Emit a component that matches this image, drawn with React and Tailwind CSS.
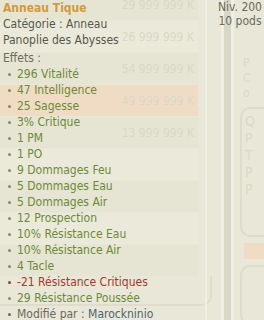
import React from "react";

const effects = [
  { t: "296 Vitalité", c: "green" },
  { t: "47 Intelligence", c: "green" },
  { t: "25 Sagesse", c: "green" },
  { t: "3% Critique", c: "green" },
  { t: "1 PM", c: "green" },
  { t: "1 PO", c: "green" },
  { t: "9 Dommages Feu", c: "green" },
  { t: "5 Dommages Eau", c: "green" },
  { t: "5 Dommages Air", c: "green" },
  { t: "12 Prospection", c: "green" },
  { t: "10% Résistance Eau", c: "green" },
  { t: "10% Résistance Air", c: "green" },
  { t: "4 Tacle", c: "green" },
  { t: "-21 Résistance Critiques", c: "red" },
  { t: "29 Résistance Poussée", c: "green" },
];

const rows = [
  { p: "29 999 999 K", bg: "bg-[#e6e4d2]" },
  { p: "26 999 999 K", bg: "bg-[#ebe9da]" },
  { p: "54 999 999 K", bg: "bg-[#e6e4d2]" },
  { p: "49 999 999 K", bg: "bg-[#f0dcc4]" },
  { p: "13 999 999 K", bg: "bg-[#e6e4d2]" },
  { p: "", bg: "bg-[#ebe9da]" },
  { p: "", bg: "bg-[#e6e4d2]" },
  { p: "", bg: "bg-[#ebe9da]" },
  { p: "", bg: "bg-[#e6e4d2]" },
];

export default function App() {
  return (
    <div
      className="relative w-[264px] h-[320px] overflow-hidden bg-[#e9e7d8]"
      style={{ fontFamily: '"DejaVu Sans Condensed", "DejaVu Sans", Verdana, sans-serif' }}
    >
      {/* faint background UI */}
      <div className="flex h-full">
        <div className="w-[205px] flex flex-col -mt-[11px]">
          <div className="w-[198px] flex flex-col gap-[1px]">
            {rows.map((r, i) => (
              <div
                key={i}
                className={`h-[31px] shrink-0 flex items-center justify-end pr-[4px] text-[12px] text-[#dbd8c6] ${r.bg}`}
              >
                {r.p}
              </div>
            ))}
          </div>
          <div className="h-[30px] shrink-0 w-[212px] rounded-br-[10px] border-b-2 border-r-2 border-[#dedccb]" />
        </div>
        <div className="w-[2px] bg-[#f1efe3]" />
        <div className="w-[14px]" />
        <div className="w-[3px] bg-[#f1efe3]" />
        <div className="w-[7px] bg-[#d9d7c6]" />
        <div className="w-[3px] bg-[#f1efe3]" />
        <div className="flex-1 pl-[6px] pt-[56px] flex flex-col gap-[6px]">
          <div className="pl-[3px] text-[12px] leading-[15px] text-[#dcd9c8]">
            <div>P</div>
            <div>C</div>
            <div>o</div>
          </div>
          <div className="h-[130px] shrink-0 rounded-l-[10px] border-2 border-r-0 border-[#dedccb] pl-[3px] pt-[4px] text-[14px] leading-[17px] text-[#dcd9c8]">
            <div>Q</div>
            <div>P</div>
            <div>T</div>
            <div>P</div>
            <div>P</div>
          </div>
          <div className="h-[16px] shrink-0 bg-[#f0dcc4] ml-[4px]" />
          <div className="h-[60px] shrink-0 rounded-l-[10px] border-2 border-r-0 border-[#dedccb]" />
        </div>
      </div>

      {/* tooltip */}
      <div className="absolute left-[3px] top-0 text-[12px] leading-[16px]">
        <div className="font-bold text-[#d09b3e]">Anneau Tique</div>
        <div className="text-[#57574c]">Catégorie : Anneau</div>
        <div className="text-[#57574c]">Panoplie des Abysses</div>
        <div className="text-[#6d6d5f] mt-[2px]">Effets :</div>
        <ul className="ml-[5px]">
          {effects.map((e, i) => (
            <li key={i} className="flex items-center">
              <span
                className={`w-[3px] h-[3px] rounded-full mr-[6px] ${
                  e.c === "red" ? "bg-[#a33a2c]" : "bg-[#7a925a]"
                }`}
              />
              <span className={e.c === "red" ? "text-[#a33a2c]" : "text-[#6c8a3c]"}>{e.t}</span>
            </li>
          ))}
          <li className="flex items-center">
            <span className="w-[3px] h-[3px] rounded-full mr-[6px] bg-[#6a6a5e]" />
            <span className="text-[#6a6a5e] whitespace-pre">Modifié par : </span>
            <span className="text-[#4e6570]">Marockninio</span>
          </li>
        </ul>
      </div>

      <div className="absolute right-[2px] top-0 text-[12px] leading-[14px] text-[#6a6a5a] text-center">
        <div>Niv. 200</div>
        <div>10 pods</div>
      </div>
    </div>
  );
}
